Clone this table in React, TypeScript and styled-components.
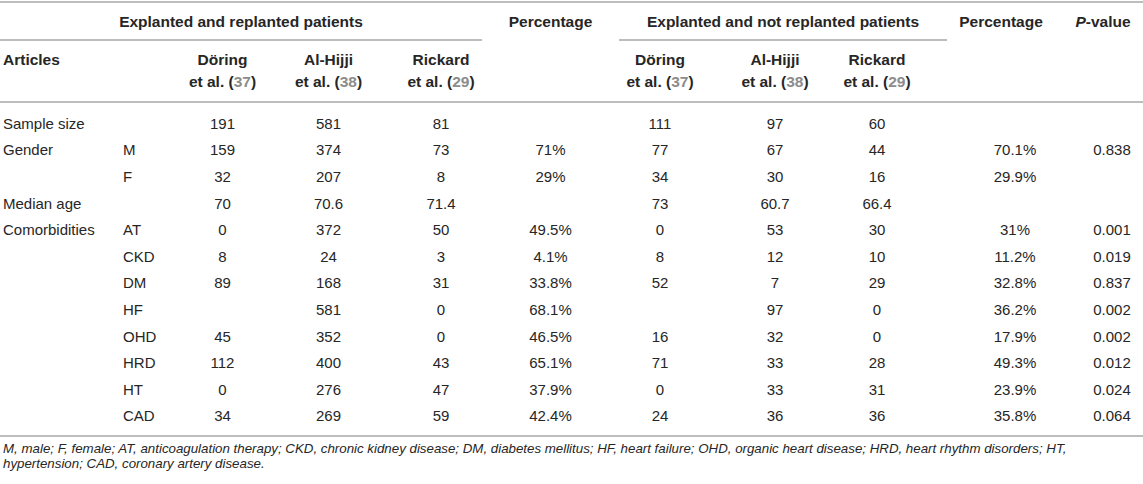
import React from "react";
import styled, { createGlobalStyle, css } from "styled-components";

const GlobalStyle = createGlobalStyle`
  body {
    margin: 0;
    background: #fff;
  }
`;

// column tracks: article, sub-label, 3 studies, percentage, 3 studies, percentage, p-value
const COLUMNS = "118px 52px 105px 107px 100px 137px 101px 110px 117px 121px 75px";
const RULE = "#bdbdbd";

const shiftPad = (shift = 0) => {
  if (shift > 0) return css`padding-left: ${shift * 2}px;`;
  if (shift < 0) return css`padding-right: ${-shift * 2}px;`;
  return "";
};

const Page = styled.div`
  width: 1143px;
  padding-top: 1px;
  font-family: "Liberation Sans", Arial, Helvetica, sans-serif;
  color: #262626;
`;

const Head = styled.div`
  display: grid;
  grid-template-columns: ${COLUMNS};
  grid-template-rows: 38px 60px;
  border-top: 2px solid ${RULE};
  border-bottom: 2px solid ${RULE};
  font-weight: bold;
  font-size: 15.5px;
  line-height: 22px;
`;

const GroupHeading = styled.div<{ $from: number; $to: number }>`
  grid-column: ${(p) => p.$from} / ${(p) => p.$to};
  grid-row: 1;
  padding-top: 8px;
  border-bottom: 2px solid ${RULE};
  text-align: center;
  white-space: nowrap;
`;

const SpanHeading = styled.div<{ $col: number; $shift?: number }>`
  grid-column: ${(p) => p.$col};
  grid-row: 1 / 3;
  padding-top: 8px;
  text-align: center;
  white-space: nowrap;
  ${(p) => shiftPad(p.$shift)}
`;

const ColHeading = styled.div<{ $col: number; $shift?: number; $left?: boolean }>`
  grid-column: ${(p) => p.$col};
  grid-row: 2;
  padding-top: 8px;
  white-space: nowrap;
  text-align: ${(p) => (p.$left ? "left" : "center")};
  ${(p) => (p.$left ? "padding-left: 3px;" : "")}
  ${(p) => shiftPad(p.$shift)}
`;

const Ref = styled.span`
  color: #8c8c8c;
`;

const Body = styled.div`
  display: grid;
  grid-template-columns: ${COLUMNS};
  grid-auto-rows: 26.6px;
  align-items: center;
  padding: 7px 0 6px;
  border-bottom: 2px solid ${RULE};
  font-size: 15px;
`;

const Cell = styled.div<{ $shift?: number; $indent?: number }>`
  white-space: nowrap;
  text-align: ${(p) => (p.$indent !== undefined ? "left" : "center")};
  ${(p) => (p.$indent !== undefined ? `padding-left: ${p.$indent}px;` : "")}
  ${(p) => shiftPad(p.$shift)}
`;

const Footnote = styled.div`
  padding: 4px 3px 0;
  font-size: 13.3px;
  font-style: italic;
  line-height: 15px;
`;

const FootLine = styled.div`
  white-space: nowrap;
`;

interface Row {
  label?: string;
  sub?: string;
  values: string[];
}

const rows: Row[] = [
  { label: "Sample size", values: ["191", "581", "81", "", "111", "97", "60", "", ""] },
  { label: "Gender", sub: "M", values: ["159", "374", "73", "71%", "77", "67", "44", "70.1%", "0.838"] },
  { sub: "F", values: ["32", "207", "8", "29%", "34", "30", "16", "29.9%", ""] },
  { label: "Median age", values: ["70", "70.6", "71.4", "", "73", "60.7", "66.4", "", ""] },
  { label: "Comorbidities", sub: "AT", values: ["0", "372", "50", "49.5%", "0", "53", "30", "31%", "0.001"] },
  { sub: "CKD", values: ["8", "24", "3", "4.1%", "8", "12", "10", "11.2%", "0.019"] },
  { sub: "DM", values: ["89", "168", "31", "33.8%", "52", "7", "29", "32.8%", "0.837"] },
  { sub: "HF", values: ["", "581", "0", "68.1%", "", "97", "0", "36.2%", "0.002"] },
  { sub: "OHD", values: ["45", "352", "0", "46.5%", "16", "32", "0", "17.9%", "0.002"] },
  { sub: "HRD", values: ["112", "400", "43", "65.1%", "71", "33", "28", "49.3%", "0.012"] },
  { sub: "HT", values: ["0", "276", "47", "37.9%", "0", "33", "31", "23.9%", "0.024"] },
  { sub: "CAD", values: ["34", "269", "59", "42.4%", "24", "36", "36", "35.8%", "0.064"] },
];

// horizontal nudge of the value columns (px, + is right)
const valueShift = [0, 0, 9, 0, -9.5, 0, -11.5, 7.5, 6.5];

const studies = [
  { name: "Döring", ref: "37" },
  { name: "Al-Hijji", ref: "38" },
  { name: "Rickard", ref: "29" },
];

const StudyHeadings = ({ start, shifts }: { start: number; shifts: number[] }) => (
  <>
    {studies.map((s, i) => (
      <ColHeading key={s.name} $col={start + i} $shift={shifts[i]}>
        {s.name}
        <br />
        et al. (<Ref>{s.ref}</Ref>)
      </ColHeading>
    ))}
  </>
);

const App = () => {
  return (
    <Page>
      <GlobalStyle />
      <Head>
        <GroupHeading $from={1} $to={6}>
          Explanted and replanted patients
        </GroupHeading>
        <SpanHeading $col={6}>Percentage</SpanHeading>
        <GroupHeading $from={7} $to={10}>
          Explanted and not replanted patients
        </GroupHeading>
        <SpanHeading $col={10} $shift={-6.5}>
          Percentage
        </SpanHeading>
        <SpanHeading $col={11} $shift={-2.5}>
          <i>P</i>-value
        </SpanHeading>
        <ColHeading $col={1} $left>
          Articles
        </ColHeading>
        <StudyHeadings start={3} shifts={[0, 0, 9]} />
        <StudyHeadings start={7} shifts={[-9.5, 0, -11.5]} />
      </Head>
      <Body>
        {rows.map((r, i) => (
          <React.Fragment key={i}>
            <Cell $indent={3}>{r.label}</Cell>
            <Cell $indent={5}>{r.sub}</Cell>
            {r.values.map((v, j) => (
              <Cell key={j} $shift={valueShift[j]}>
                {v}
              </Cell>
            ))}
          </React.Fragment>
        ))}
      </Body>
      <Footnote>
        <FootLine>
          M, male; F, female; AT, anticoagulation therapy; CKD, chronic kidney disease; DM, diabetes
          mellitus; HF, heart failure; OHD, organic heart disease; HRD, heart rhythm disorders; HT,
        </FootLine>
        <FootLine>hypertension; CAD, coronary artery disease.</FootLine>
      </Footnote>
    </Page>
  );
};

export default App;
